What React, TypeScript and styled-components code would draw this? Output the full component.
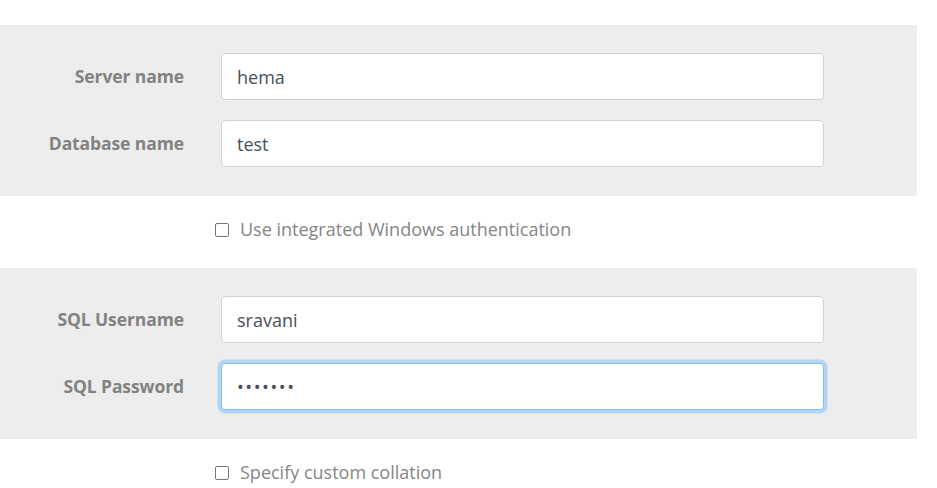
import React from "react";
import styled, { createGlobalStyle, css } from "styled-components";

const Global = createGlobalStyle`
  html, body { margin: 0; padding: 0; background: #ffffff; }
  body { font-family: "Open Sans", "Noto Sans", sans-serif; }
  * { box-sizing: border-box; }
`;

const Page = styled.div`
  width: 917px;
  padding-top: 25px;
`;

const Panel = styled.section`
  background: #ededed;
  padding: 28px 0 29px;
  display: flex;
  flex-direction: column;
  gap: 20px;
`;

const FieldRow = styled.div`
  display: grid;
  grid-template-columns: 184px 603px;
  column-gap: 37px;
  align-items: center;
`;

const Label = styled.label`
  text-align: right;
  font-weight: 700;
  font-size: 17.5px;
  color: #828282;
  letter-spacing: -0.1px;
  padding-bottom: 1px;
`;

const Input = styled.input<{ $focused?: boolean }>`
  height: 47px;
  width: 100%;
  border: 1px solid #cfd3d8;
  border-radius: 4px;
  background: #fff;
  padding: 0 15px;
  font-family: "Open Sans", "Noto Sans", sans-serif;
  font-size: 18px;
  color: #495057;
  outline: none;
  caret-color: #222;
  &[type="password"] {
    letter-spacing: 1.6px;
  }
  ${(p) =>
    p.$focused &&
    css`
      border-color: #80bdff;
      box-shadow: 0 0 0 3.5px #b5d5f5;
    `}
  &:focus {
    border-color: #80bdff;
    box-shadow: 0 0 0 3.5px #b5d5f5;
  }
`;

const CheckRow = styled.label`
  height: 72px;
  display: flex;
  align-items: center;
  gap: 11px;
  padding-left: 215px;
  padding-bottom: 6px;
  font-size: 18px;
  color: #868686;
`;

const Box = styled.span`
  width: 14px;
  height: 14px;
  border: 1.5px solid #767676;
  border-radius: 2px;
  background: #fff;
  flex: none;
  margin-top: 1px;
`;

export default function App() {
  return (
    <Page>
      <Global />
      <Panel>
        <FieldRow>
          <Label>Server name</Label>
          <Input defaultValue="hema" />
        </FieldRow>
        <FieldRow>
          <Label>Database name</Label>
          <Input defaultValue="test" />
        </FieldRow>
      </Panel>
      <CheckRow>
        <Box />
        Use integrated Windows authentication
      </CheckRow>
      <Panel>
        <FieldRow>
          <Label>SQL Username</Label>
          <Input defaultValue="sravani" />
        </FieldRow>
        <FieldRow>
          <Label>SQL Password</Label>
          <Input type="password" defaultValue="1234567" $focused autoFocus />
        </FieldRow>
      </Panel>
      <CheckRow>
        <Box />
        Specify custom collation
      </CheckRow>
    </Page>
  );
}
